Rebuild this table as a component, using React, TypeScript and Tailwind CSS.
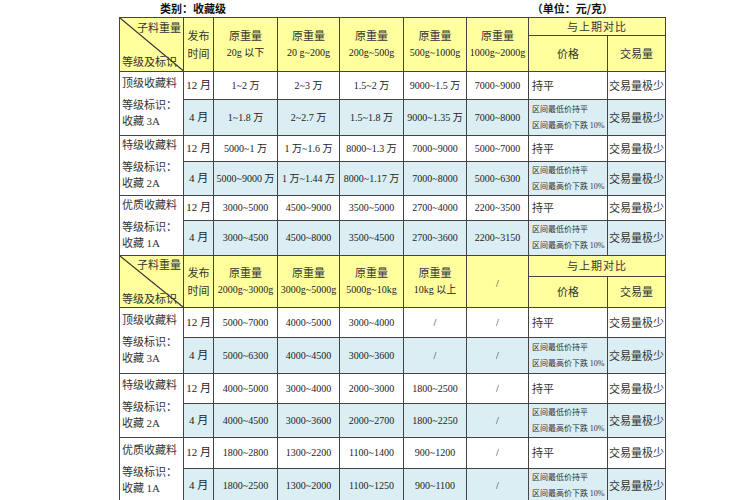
import React from "react";

type Row = {
  month: string;
  values: string[];
};

type Group = {
  name: string;
  grade: string;
  rows: [Row, Row];
};

type Section = {
  heads: (string[] | string)[];
  groups: Group[];
  heights: number[];
};

const sans = "font-['Noto_Sans_CJK_SC','Liberation_Sans',sans-serif]";
const serif = "font-['Liberation_Serif','Noto_Sans_CJK_SC',serif]";
const line = "border border-[#444444]";
const yellow = "bg-[#ffff9e]";
const blue = "bg-[#daeef3]";

const sections: Section[] = [
  {
    heads: [
      ["原重量", "20g 以下"],
      ["原重量", "20 g~200g"],
      ["原重量", "200g~500g"],
      ["原重量", "500g~1000g"],
      ["原重量", "1000g~2000g"],
    ],
    heights: [16, 36, 28, 36, 26, 34, 25, 35],
    groups: [
      {
        name: "顶级收藏料",
        grade: "3A",
        rows: [
          { month: "12 月", values: ["1~2 万", "2~3 万", "1.5~2 万", "9000~1.5 万", "7000~9000"] },
          { month: "4 月", values: ["1~1.8 万", "2~2.7 万", "1.5~1.8 万", "9000~1.35 万", "7000~8000"] },
        ],
      },
      {
        name: "特级收藏料",
        grade: "2A",
        rows: [
          { month: "12 月", values: ["5000~1 万", "1 万~1.6 万", "8000~1.3 万", "7000~9000", "5000~7000"] },
          { month: "4 月", values: ["5000~9000 万", "1 万~1.44 万", "8000~1.17 万", "7000~8000", "5000~6300"] },
        ],
      },
      {
        name: "优质收藏料",
        grade: "1A",
        rows: [
          { month: "12 月", values: ["3000~5000", "4500~9000", "3500~5000", "2700~4000", "2200~3500"] },
          { month: "4 月", values: ["3000~4500", "4500~8000", "3500~4500", "2700~3600", "2200~3150"] },
        ],
      },
    ],
  },
  {
    heads: [
      ["原重量", "2000g~3000g"],
      ["原重量", "3000g~5000g"],
      ["原重量", "5000g~10kg"],
      ["原重量", "10kg 以上"],
      "/",
    ],
    heights: [21, 31, 30, 36, 30, 34, 31, 35],
    groups: [
      {
        name: "顶级收藏料",
        grade: "3A",
        rows: [
          { month: "12 月", values: ["5000~7000", "4000~5000", "3000~4000", "/", "/"] },
          { month: "4 月", values: ["5000~6300", "4000~4500", "3000~3600", "/", "/"] },
        ],
      },
      {
        name: "特级收藏料",
        grade: "2A",
        rows: [
          { month: "12 月", values: ["4000~5000", "3000~4000", "2000~3000", "1800~2500", "/"] },
          { month: "4 月", values: ["4000~4500", "3000~3600", "2000~2700", "1800~2250", "/"] },
        ],
      },
      {
        name: "优质收藏料",
        grade: "1A",
        rows: [
          { month: "12 月", values: ["1800~2800", "1300~2200", "1100~1400", "900~1200", "/"] },
          { month: "4 月", values: ["1800~2500", "1300~2000", "1100~1250", "900~1100", "/"] },
        ],
      },
    ],
  },
];

const CornerCell = () => (
  <td rowSpan={2} className={`${line} ${yellow} relative p-0 ${sans} text-[11px] text-[#333]`}>
    <svg className="absolute inset-0 h-full w-full" preserveAspectRatio="none" viewBox="0 0 100 100">
      <line x1="0" y1="0" x2="100" y2="100" stroke="#333" strokeWidth="1.2" vectorEffect="non-scaling-stroke" />
    </svg>
    <div className="relative flex h-[51px] flex-col justify-between px-[2px] pb-[1px]">
      <div className="text-right leading-[16px]">子料重量</div>
      <div className="text-left leading-[16px]">等级及标识</div>
    </div>
  </td>
);

const SectionHead = ({ section }: { section: Section }) => (
  <>
    <tr style={{ height: section.heights[0] }}>
      <CornerCell />
      <td rowSpan={2} className={`${line} ${yellow} p-0 text-center ${sans} text-[11px] leading-[18px] text-[#333]`}>
        <div>发布</div>
        <div>时间</div>
      </td>
      {section.heads.map((h, i) => (
        <td key={i} rowSpan={2} className={`${line} ${yellow} p-0 text-center text-[#222]`}>
          {typeof h === "string" ? (
            <span className={`${serif} text-[10px]`}>{h}</span>
          ) : (
            <>
              <div className={`${sans} text-[11px] leading-[18px] text-[#333]`}>{h[0]}</div>
              <div className={`${serif} whitespace-nowrap text-[10px] leading-[18px]`}>{h[1]}</div>
            </>
          )}
        </td>
      ))}
      <td colSpan={2} className={`${line} ${yellow} p-0 text-center ${sans} text-[11px] tracking-[1px] text-[#333]`}>
        与上期对比
      </td>
    </tr>
    <tr style={{ height: section.heights[1] }}>
      <td className={`${line} ${yellow} p-0 text-center ${sans} text-[11px] text-[#333]`}>价格</td>
      <td className={`${line} ${yellow} p-0 text-center ${sans} text-[11px] text-[#333]`}>交易量</td>
    </tr>
  </>
);

const GroupRows = ({ group, heights }: { group: Group; heights: number[] }) => (
  <>
    {group.rows.map((row, r) => {
      const bg = r === 0 ? "bg-white" : blue;
      return (
        <tr key={r} style={{ height: heights[r] }}>
          {r === 0 && (
            <td rowSpan={2} className={`${line} bg-white p-0 pl-[2px] pb-[4px] align-middle ${sans} text-[11px] text-[#333]`}>
              <div className="mb-[6px] leading-[16px]">{group.name}</div>
              <div className="leading-[16px]">等级标识：</div>
              <div className="leading-[16px]">
                收藏 <span className={serif}>{group.grade}</span>
              </div>
            </td>
          )}
          <td className={`${line} ${bg} p-0 text-center ${serif} text-[11px] text-[#222]`}>{row.month}</td>
          {row.values.map((v, i) => (
            <td key={i} className={`${line} ${bg} p-0 text-center whitespace-nowrap ${serif} text-[10px] text-[#222]`}>
              {v}
            </td>
          ))}
          {r === 0 ? (
            <td className={`${line} ${bg} p-0 pl-[3px] ${sans} text-[11px] text-[#333]`}>持平</td>
          ) : (
            <td className={`${line} ${bg} p-0 pl-[3px] whitespace-nowrap ${sans} text-[8px] leading-[16px] text-[#333]`}>
              <div>区间最低价持平</div>
              <div>
                区间最高价下跌 <span className={serif}>10%</span>
              </div>
            </td>
          )}
          <td className={`${line} ${bg} p-0 pl-[1px] whitespace-nowrap ${sans} text-[11px] text-[#333]`}>交易量极少</td>
        </tr>
      );
    })}
  </>
);

const widths = [64, 30, 64, 62, 64, 63, 62, 79, 58];

export default function App() {
  return (
    <div className="h-[500px] w-[750px] overflow-hidden bg-white">
      <div className="w-[546px] ml-[119px]">
        <div className={`flex h-[17px] items-center ${sans} text-[11px] font-bold text-[#111]`}>
          <span className="ml-[41px]">类别：收藏级</span>
          <span className="ml-auto mr-[52px]">（单位：元/克）</span>
        </div>
        <table className="w-[546px] table-fixed border-collapse">
          <colgroup>
            {widths.map((w, i) => (
              <col key={i} style={{ width: w }} />
            ))}
          </colgroup>
          {sections.map((section, s) => (
            <tbody key={s}>
              <SectionHead section={section} />
              {section.groups.map((g, gi) => (
                <GroupRows key={gi} group={g} heights={section.heights.slice(2 + gi * 2, 4 + gi * 2)} />
              ))}
            </tbody>
          ))}
        </table>
      </div>
    </div>
  );
}
